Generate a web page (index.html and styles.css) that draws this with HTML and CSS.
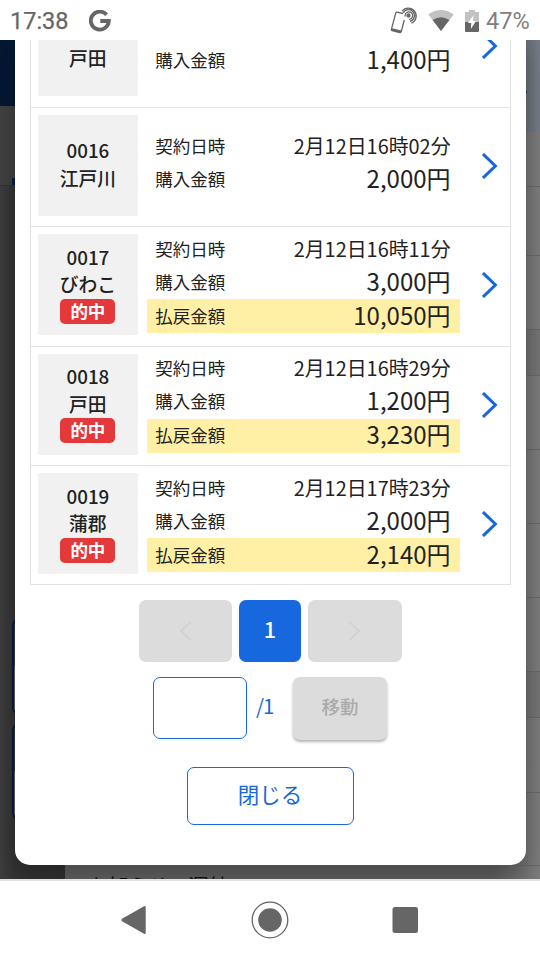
FILE: index.html
```
<!DOCTYPE html>
<html lang="ja">
<head>
<meta charset="utf-8">
<title>購入履歴</title>
<link rel="stylesheet" href="styles.css">
</head>
<body>
<header class="status">
  <span class="clock">17:38</span>
  <svg class="g-logo" width="22" height="22" viewBox="0 0 22 22"><path d="M17.6 4.700A9 9 0 1 0 19.800 11H11.300" fill="none" stroke="#666" stroke-width="3.800"/></svg>
  <span class="spacer"></span>
  <svg class="cast" width="28" height="28" viewBox="0 0 28 28" fill="none" stroke="#666" stroke-width="1.300"><path d="M13 6.500 7.200 5.200Q6 5 5.700 6.100L1.400 22.300Q1.200 23.400 2.300 23.700L9.800 25.500Q11 25.700 11.300 24.600L14.300 13"/><path d="M2 22.500 11 24.800" stroke-width="2.500"/><circle cx="18.500" cy="8.500" r="1.500" fill="#666"/><path d="M15.200 9.500a3.800 3.800 0 1 1 3.700 2.900M13.200 6.100a5.900 5.900 0 1 1 6.700 8.200M12 4.200a7.900 7.900 0 1 1 9.500 12"/></svg>
  <svg class="wifi" width="26" height="22" viewBox="0 0 26 22"><path d="M.3 4.400Q13-4.400 25.700 4.400L13 21Z" fill="#c2c2c2"/><path d="M4.600 10Q13 4.300 21.400 10L13 21Z" fill="#666"/></svg>
  <svg class="battery" width="14" height="22" viewBox="0 0 14 22"><path d="M4 0h6v2h3q1 0 1 1v9H0V3q0-1 1-1h3Z" fill="#c2c2c2"/><path d="M0 12h14v9q0 1-1 1H1q-1 0-1-1Z" fill="#666"/><path d="M8.500 5 3 13h3.300L5.800 19 11 11H8Z" fill="#fff"/></svg>
  <span class="percent">47%</span>
</header>

<main class="viewport">
  <div class="page">
    <aside class="drawer">
      <div class="drawer-head"></div>
      <div class="drawer-tab"></div>
      <div class="drawer-button"></div>
      <div class="drawer-button"></div>
    </aside>
    <div class="content">
      <div class="banner"><i></i></div>
      <div class="line l1"></div><div class="line l2"></div><div class="line l3"></div><div class="line l4 shade"></div><div class="line l5"></div><div class="line l6"></div><div class="line l7"></div><div class="line l8"></div><div class="line l9 shade"></div><div class="line l10"></div><div class="line l11"></div>
      <p class="notice">お知らせ・運航</p>
    </div>
  </div>
  <section class="modal">
    <div class="list">
      <article class="row">
        <div class="venue"><span class="blank"></span><span>戸田</span></div>
        <dl class="info"><div class="date"></div><div><dt>購入金額</dt><dd>1,400円</dd></div></dl>
        <svg class="chevron" width="16" height="26" viewBox="0 0 16 26"><path d="M1 1 13.400 13 1 25"/></svg>
      </article>
      <article class="row">
        <div class="venue"><span>0016</span><span>江戸川</span></div>
        <dl class="info"><div class="date"><dt>契約日時</dt><dd>2月12日16時02分</dd></div><div><dt>購入金額</dt><dd>2,000円</dd></div></dl>
        <svg class="chevron" width="16" height="26" viewBox="0 0 16 26"><path d="M1 1 13.400 13 1 25"/></svg>
      </article>
      <article class="row">
        <div class="venue"><span>0017</span><span>びわこ</span><b>的中</b></div>
        <dl class="info"><div class="date"><dt>契約日時</dt><dd>2月12日16時11分</dd></div><div><dt>購入金額</dt><dd>3,000円</dd></div><div class="payout"><dt>払戻金額</dt><dd>10,050円</dd></div></dl>
        <svg class="chevron" width="16" height="26" viewBox="0 0 16 26"><path d="M1 1 13.400 13 1 25"/></svg>
      </article>
      <article class="row">
        <div class="venue"><span>0018</span><span>戸田</span><b>的中</b></div>
        <dl class="info"><div class="date"><dt>契約日時</dt><dd>2月12日16時29分</dd></div><div><dt>購入金額</dt><dd>1,200円</dd></div><div class="payout"><dt>払戻金額</dt><dd>3,230円</dd></div></dl>
        <svg class="chevron" width="16" height="26" viewBox="0 0 16 26"><path d="M1 1 13.400 13 1 25"/></svg>
      </article>
      <article class="row">
        <div class="venue"><span>0019</span><span>蒲郡</span><b>的中</b></div>
        <dl class="info"><div class="date"><dt>契約日時</dt><dd>2月12日17時23分</dd></div><div><dt>購入金額</dt><dd>2,000円</dd></div><div class="payout"><dt>払戻金額</dt><dd>2,140円</dd></div></dl>
        <svg class="chevron" width="16" height="26" viewBox="0 0 16 26"><path d="M1 1 13.400 13 1 25"/></svg>
      </article>
    </div>
    <nav class="pager">
      <button class="page-btn"><svg width="13" height="20" viewBox="0 0 13 20"><path d="M12 .7 2 10l10 9.300"/></svg></button>
      <button class="page-btn current">1</button>
      <button class="page-btn"><svg width="13" height="20" viewBox="0 0 13 20"><path d="M1 .7 11 10 1 19.300"/></svg></button>
    </nav>
    <form class="jump">
      <input class="jump-input" type="text">
      <span class="total">/1</span>
      <button class="go" type="button">移動</button>
    </form>
    <button class="close">閉じる</button>
  </section>
</main>

<footer class="navbar">
  <svg width="300" height="40" viewBox="0 0 300 40" fill="#666"><path d="M2 18.800 24 6.200q1.700-.8 1.700 1v25.600q0 1.800-1.700 1L2 21.200q-1.400-1.200 0-2.400Z"/><circle cx="150" cy="20" r="17.800" fill="none" stroke="#666" stroke-width="1.300"/><circle cx="150" cy="20" r="11.800"/><rect x="272.500" y="7" width="25.500" height="26" rx="2.500"/></svg>
</footer>
</body>
</html>
```
FILE: styles.css
```
* { box-sizing: border-box; }

body {
  margin: 0;
  width: 540px;
  height: 960px;
  overflow: hidden;
  display: flex;
  flex-direction: column;
  background: #fff;
  color: #222;
  font-family: "Noto Sans CJK JP", sans-serif;
}

button, input { font-family: inherit; margin: 0; padding: 0; }

.status {
  height: 40px;
  flex: none;
  display: flex;
  align-items: center;
  padding: 2px 10px 0 10px;
  color: #666;
  font: 400 23.500px/40px Roboto, sans-serif;
}
.clock { width: 61px; -webkit-text-stroke: .25px #666; }
.g-logo { margin-left: 18px; }
.spacer { flex: 1; }
.cast { margin-right: 10px; }
.wifi { margin-right: 11px; }
.battery { margin-right: 7px; }
.percent { width: 44px; color: #808080; white-space: nowrap; }

.viewport {
  height: 839px;
  flex: none;
  display: grid;
  overflow: hidden;
}
.page, .modal { grid-area: 1 / 1; }

.page { display: flex; height: 839px; overflow: hidden; }
.drawer { width: 65px; background: linear-gradient(90deg, #3d3d3d, #333 14px, #2f2f2f); }
.drawer-head { height: 66px; background: #041733; }
.drawer-tab { height: 80px; background: #404040; border-bottom: 1px solid #303030; margin-bottom: 433px; display: flex; align-items: flex-end; }
.drawer-tab::after { content: ""; width: 40px; height: 7px; margin-left: 12px; background: #05204a; }
.drawer-button { height: 95px; margin: 0 0 10px 12px; border: 2px solid #041a3d; border-radius: 6px; background: linear-gradient(#35373b 50%, #63605b 50%); }
.content { flex: 1; background: linear-gradient(90deg, #5e5e5e 90%, #707070 96.800%, #7c7c7c); }
.banner { height: 92px; padding-top: 50px; background: linear-gradient(90deg, #666a73 97%, #757c88); }
.banner i { display: block; width: 462px; height: 4px; border-right: 3px solid #0b3475; border-radius: 2px; }
.line { border-bottom: 1px solid #666; }
.shade { background: rgba(0, 0, 0, .05); }
.l1 { height: 55px; }
.l2 { height: 69px; }
.l3 { height: 74px; }
.l4 { height: 46px; }
.l5 { height: 74px; }
.l6 { height: 74px; }
.l7 { height: 74px; }
.l8 { height: 74px; }
.l9 { height: 46px; }
.l10 { height: 75px; }
.l11 { height: 73px; }
.notice { margin: 5px 0 0 24px; color: #111; font-size: 20px; line-height: 30px; }

.modal {
  width: 511px;
  height: 825px;
  margin-left: 14.500px;
  padding: 0 15px;
  display: flex;
  flex-direction: column;
  align-items: center;
  background: #fff;
  border-radius: 0 0 15px 15px;
  box-shadow: 0 8px 22px rgba(0, 0, 0, .25);
  z-index: 1;
}

.list {
  width: 481px;
  height: 545px;
  flex: none;
  overflow: hidden;
  display: flex;
  flex-direction: column;
  justify-content: flex-end;
  border: solid #e2e2e2;
  border-width: 0 1.500px 1.500px;
}
.row {
  height: 119.500px;
  flex: none;
  display: flex;
  border-top: 1.500px solid #e2e2e2;
  padding: 7px 12px 0 7px;
}
.row:last-child { height: 119px; }
.venue {
  width: 101px;
  height: 101px;
  padding-bottom: 3px;
  display: flex;
  flex-direction: column;
  align-items: center;
  justify-content: center;
  background: #f1f1f1;
  font-size: 18.800px;
  font-weight: 500;
  line-height: 27.500px;
}
.venue .blank { height: 27.500px; }
.venue b {
  width: 55px;
  height: 25px;
  margin-top: 1px;
  border-radius: 5px;
  background: #e5383b;
  color: #fff;
  font-size: 17.500px;
  line-height: 24px;
  text-align: center;
}
.info {
  width: 313px;
  height: 101px;
  margin: 0 0 0 9px;
  padding-bottom: 3px;
  display: flex;
  flex-direction: column;
  justify-content: center;
}
.info div {
  height: 34px;
  flex: none;
  display: flex;
  align-items: center;
  justify-content: space-between;
  padding: 0 9px 1px 8px;
}
.info .date { height: 32px; }
.info .payout { background: #fff0a5; }
dt { font-size: 17.500px; line-height: 32px; }
dd { margin: 0; font-size: 24px; line-height: 30px; padding-bottom: 2px; }
.date dd { font-size: 19.900px; padding-bottom: 0; }
.chevron { margin: 38px 0 0 22px; fill: none; stroke: #1768de; stroke-width: 3; }

.pager { display: flex; gap: 7px; margin-top: 15px; }
.page-btn {
  width: 93.500px;
  height: 62px;
  border: 0;
  border-radius: 7px;
  background: #dcdcdc;
  display: grid;
  place-items: center;
}
.page-btn path { fill: none; stroke: #d2d2d2; stroke-width: 1.800; }
.current { width: 62px; padding-bottom: 5px; background: #1768de; color: #fff; font-size: 21.500px; font-weight: 500; }

.jump { display: flex; margin-top: 14.500px; height: 62px; }
.jump-input { width: 94px; height: 62px; border: 1.500px solid #1768de; border-radius: 7px; background: #fff; }
.total { width: 46px; padding-left: 9px; color: #1768de; font-size: 20.500px; line-height: 57px; letter-spacing: -1px; }
.go {
  width: 94px;
  height: 63px;
  border: 0;
  border-radius: 7px;
  padding-bottom: 4px;
  background: #dcdcdc;
  box-shadow: 0 2px 3px rgba(0, 0, 0, .3);
  color: #aaa;
  font-size: 18.500px;
  font-weight: 500;
}
.close {
  width: 167px;
  height: 58px;
  flex: none;
  margin-top: 28px;
  padding-bottom: 5px;
  border: 1.500px solid #1768de;
  border-radius: 7px;
  background: #fff;
  color: #1768de;
  font-size: 21.500px;
}

.navbar {
  flex: 1;
  border-top: 2px solid #e2e2e2;
  padding-bottom: 2px;
  display: flex;
  justify-content: center;
  align-items: center;
}
```
